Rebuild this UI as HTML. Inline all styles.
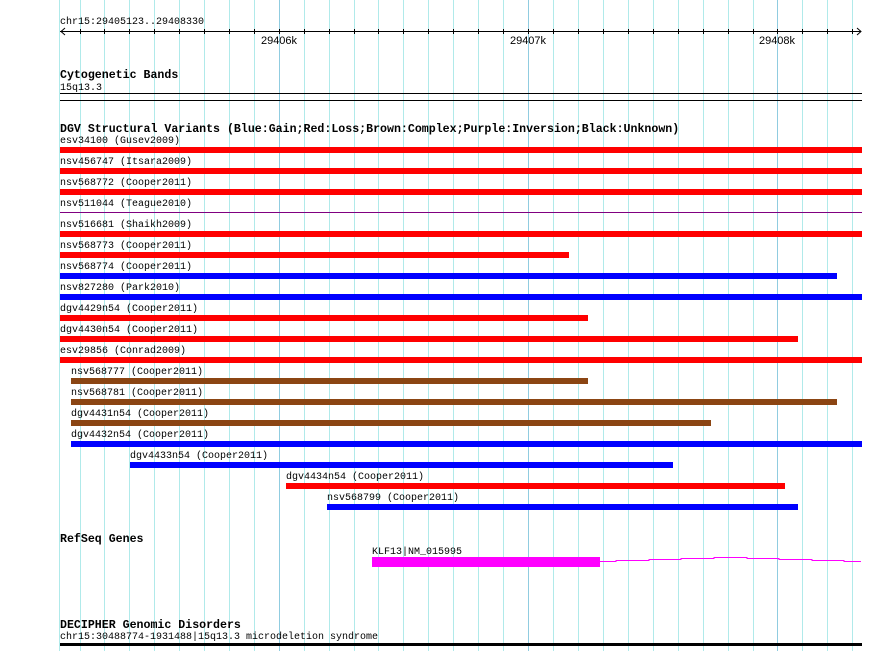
<!DOCTYPE html>
<html><head><style>
body{margin:0;background:#fff;width:890px;height:651px;overflow:hidden}
svg{display:block}
.m{font-family:"Liberation Mono",monospace;font-size:10px;fill:#000}
.b{font-family:"Liberation Mono",monospace;font-size:11.6px;font-weight:bold;fill:#000}
.s{font-family:"Liberation Sans",sans-serif;font-size:11px;fill:#000}
</style></head><body>
<svg width="890" height="651" xmlns="http://www.w3.org/2000/svg">
<g id="grid" stroke-width="1">
<line x1="59.5" y1="0" x2="59.5" y2="651" stroke="#b0eaea"/>
</g>
<script>
</script>
<g stroke="#b0eaea">
<line x1="80.5" y1="0" x2="80.5" y2="651"/><line x1="104.5" y1="0" x2="104.5" y2="651"/><line x1="129.5" y1="0" x2="129.5" y2="651"/><line x1="154.5" y1="0" x2="154.5" y2="651"/><line x1="179.5" y1="0" x2="179.5" y2="651"/><line x1="204.5" y1="0" x2="204.5" y2="651"/><line x1="229.5" y1="0" x2="229.5" y2="651"/><line x1="254.5" y1="0" x2="254.5" y2="651"/><line x1="279.5" y1="0" x2="279.5" y2="651" stroke="#90cce0"/><line x1="304.5" y1="0" x2="304.5" y2="651"/><line x1="329.5" y1="0" x2="329.5" y2="651"/><line x1="354.5" y1="0" x2="354.5" y2="651"/><line x1="378.5" y1="0" x2="378.5" y2="651"/><line x1="403.5" y1="0" x2="403.5" y2="651"/><line x1="428.5" y1="0" x2="428.5" y2="651"/><line x1="453.5" y1="0" x2="453.5" y2="651"/><line x1="478.5" y1="0" x2="478.5" y2="651"/><line x1="503.5" y1="0" x2="503.5" y2="651"/><line x1="528.5" y1="0" x2="528.5" y2="651" stroke="#90cce0"/><line x1="553.5" y1="0" x2="553.5" y2="651"/><line x1="578.5" y1="0" x2="578.5" y2="651"/><line x1="603.5" y1="0" x2="603.5" y2="651"/><line x1="628.5" y1="0" x2="628.5" y2="651"/><line x1="653.5" y1="0" x2="653.5" y2="651"/><line x1="678.5" y1="0" x2="678.5" y2="651"/><line x1="703.5" y1="0" x2="703.5" y2="651"/><line x1="728.5" y1="0" x2="728.5" y2="651"/><line x1="753.5" y1="0" x2="753.5" y2="651"/><line x1="777.5" y1="0" x2="777.5" y2="651" stroke="#90cce0"/><line x1="802.5" y1="0" x2="802.5" y2="651"/><line x1="827.5" y1="0" x2="827.5" y2="651"/><line x1="852.5" y1="0" x2="852.5" y2="651"/>
</g>
<!-- ruler -->
<text class="m" x="60" y="24">chr15:29405123..29408330</text>
<line x1="60" y1="31.5" x2="861" y2="31.5" stroke="#000"/>
<path d="M65 28 L61 31.5 L65 35 M857 28 L861 31.5 L857 35" stroke="#000" fill="none"/>
<g stroke="#000">
<line x1="80.5" y1="29" x2="80.5" y2="34"/><line x1="104.5" y1="29" x2="104.5" y2="34"/><line x1="129.5" y1="29" x2="129.5" y2="34"/><line x1="154.5" y1="29" x2="154.5" y2="34"/><line x1="179.5" y1="29" x2="179.5" y2="34"/><line x1="204.5" y1="29" x2="204.5" y2="34"/><line x1="229.5" y1="29" x2="229.5" y2="34"/><line x1="254.5" y1="29" x2="254.5" y2="34"/><line x1="279.5" y1="29" x2="279.5" y2="34"/><line x1="304.5" y1="29" x2="304.5" y2="34"/><line x1="329.5" y1="29" x2="329.5" y2="34"/><line x1="354.5" y1="29" x2="354.5" y2="34"/><line x1="378.5" y1="29" x2="378.5" y2="34"/><line x1="403.5" y1="29" x2="403.5" y2="34"/><line x1="428.5" y1="29" x2="428.5" y2="34"/><line x1="453.5" y1="29" x2="453.5" y2="34"/><line x1="478.5" y1="29" x2="478.5" y2="34"/><line x1="503.5" y1="29" x2="503.5" y2="34"/><line x1="528.5" y1="29" x2="528.5" y2="34"/><line x1="553.5" y1="29" x2="553.5" y2="34"/><line x1="578.5" y1="29" x2="578.5" y2="34"/><line x1="603.5" y1="29" x2="603.5" y2="34"/><line x1="628.5" y1="29" x2="628.5" y2="34"/><line x1="653.5" y1="29" x2="653.5" y2="34"/><line x1="678.5" y1="29" x2="678.5" y2="34"/><line x1="703.5" y1="29" x2="703.5" y2="34"/><line x1="728.5" y1="29" x2="728.5" y2="34"/><line x1="753.5" y1="29" x2="753.5" y2="34"/><line x1="777.5" y1="29" x2="777.5" y2="34"/><line x1="802.5" y1="29" x2="802.5" y2="34"/><line x1="827.5" y1="29" x2="827.5" y2="34"/><line x1="852.5" y1="29" x2="852.5" y2="34"/>
</g>
<text class="s" x="279" y="44" text-anchor="middle">29406k</text>
<text class="s" x="528" y="44" text-anchor="middle">29407k</text>
<text class="s" x="777" y="44" text-anchor="middle">29408k</text>
<!-- cyto -->
<text class="b" x="60" y="78">Cytogenetic Bands</text>
<text class="m" x="60" y="90">15q13.3</text>
<rect x="60" y="93" width="802" height="1" fill="#000"/>
<rect x="60" y="100" width="802" height="1" fill="#000"/>
<!-- DGV -->
<text class="b" x="60" y="132">DGV Structural Variants (Blue:Gain;Red:Loss;Brown:Complex;Purple:Inversion;Black:Unknown)</text>
<g class="m">
<text class="m" x="60" y="143">esv34100 (Gusev2009)</text>
<text class="m" x="60" y="164">nsv456747 (Itsara2009)</text>
<text class="m" x="60" y="185">nsv568772 (Cooper2011)</text>
<text class="m" x="60" y="206">nsv511044 (Teague2010)</text>
<text class="m" x="60" y="227">nsv516681 (Shaikh2009)</text>
<text class="m" x="60" y="248">nsv568773 (Cooper2011)</text>
<text class="m" x="60" y="269">nsv568774 (Cooper2011)</text>
<text class="m" x="60" y="290">nsv827280 (Park2010)</text>
<text class="m" x="60" y="311">dgv4429n54 (Cooper2011)</text>
<text class="m" x="60" y="332">dgv4430n54 (Cooper2011)</text>
<text class="m" x="60" y="353">esv29856 (Conrad2009)</text>
<text class="m" x="71" y="374">nsv568777 (Cooper2011)</text>
<text class="m" x="71" y="395">nsv568781 (Cooper2011)</text>
<text class="m" x="71" y="416">dgv4431n54 (Cooper2011)</text>
<text class="m" x="71" y="437">dgv4432n54 (Cooper2011)</text>
<text class="m" x="130" y="458">dgv4433n54 (Cooper2011)</text>
<text class="m" x="286" y="479">dgv4434n54 (Cooper2011)</text>
<text class="m" x="327" y="500">nsv568799 (Cooper2011)</text>
</g>
<rect x="60" y="147" width="802" height="6" fill="#f00"/>
<rect x="60" y="168" width="802" height="6" fill="#f00"/>
<rect x="60" y="189" width="802" height="6" fill="#f00"/>
<rect x="60" y="212" width="802" height="1" fill="#800080"/>
<rect x="60" y="231" width="802" height="6" fill="#f00"/>
<rect x="60" y="252" width="509" height="6" fill="#f00"/>
<rect x="60" y="273" width="777" height="6" fill="#00f"/>
<rect x="60" y="294" width="802" height="6" fill="#00f"/>
<rect x="60" y="315" width="528" height="6" fill="#f00"/>
<rect x="60" y="336" width="738" height="6" fill="#f00"/>
<rect x="60" y="357" width="802" height="6" fill="#f00"/>
<rect x="71" y="378" width="517" height="6" fill="#8b4513"/>
<rect x="71" y="399" width="766" height="6" fill="#8b4513"/>
<rect x="71" y="420" width="640" height="6" fill="#8b4513"/>
<rect x="71" y="441" width="791" height="6" fill="#00f"/>
<rect x="130" y="462" width="543" height="6" fill="#00f"/>
<rect x="286" y="483" width="499" height="6" fill="#f00"/>
<rect x="327" y="504" width="471" height="6" fill="#00f"/>
<!-- refseq -->
<text class="b" x="60" y="542">RefSeq Genes</text>
<text class="m" x="372" y="554">KLF13|NM_015995</text>
<rect x="372" y="557" width="228" height="10" fill="#f0f"/>
<path d="M600 561.5 H616 V560.5 H649 V559.5 H681 V558.5 H714 V557.5 H747 V558.5 H779 V559.5 H812 V560.5 H844 V561.5 H861" stroke="#f0f" fill="none"/>
<!-- decipher -->
<text class="b" x="60" y="628">DECIPHER Genomic Disorders</text>
<text class="m" x="60" y="639">chr15:30488774-1931488|15q13.3 microdeletion syndrome</text>
<rect x="60" y="643" width="802" height="3" fill="#000"/>
</svg>
</body></html>
